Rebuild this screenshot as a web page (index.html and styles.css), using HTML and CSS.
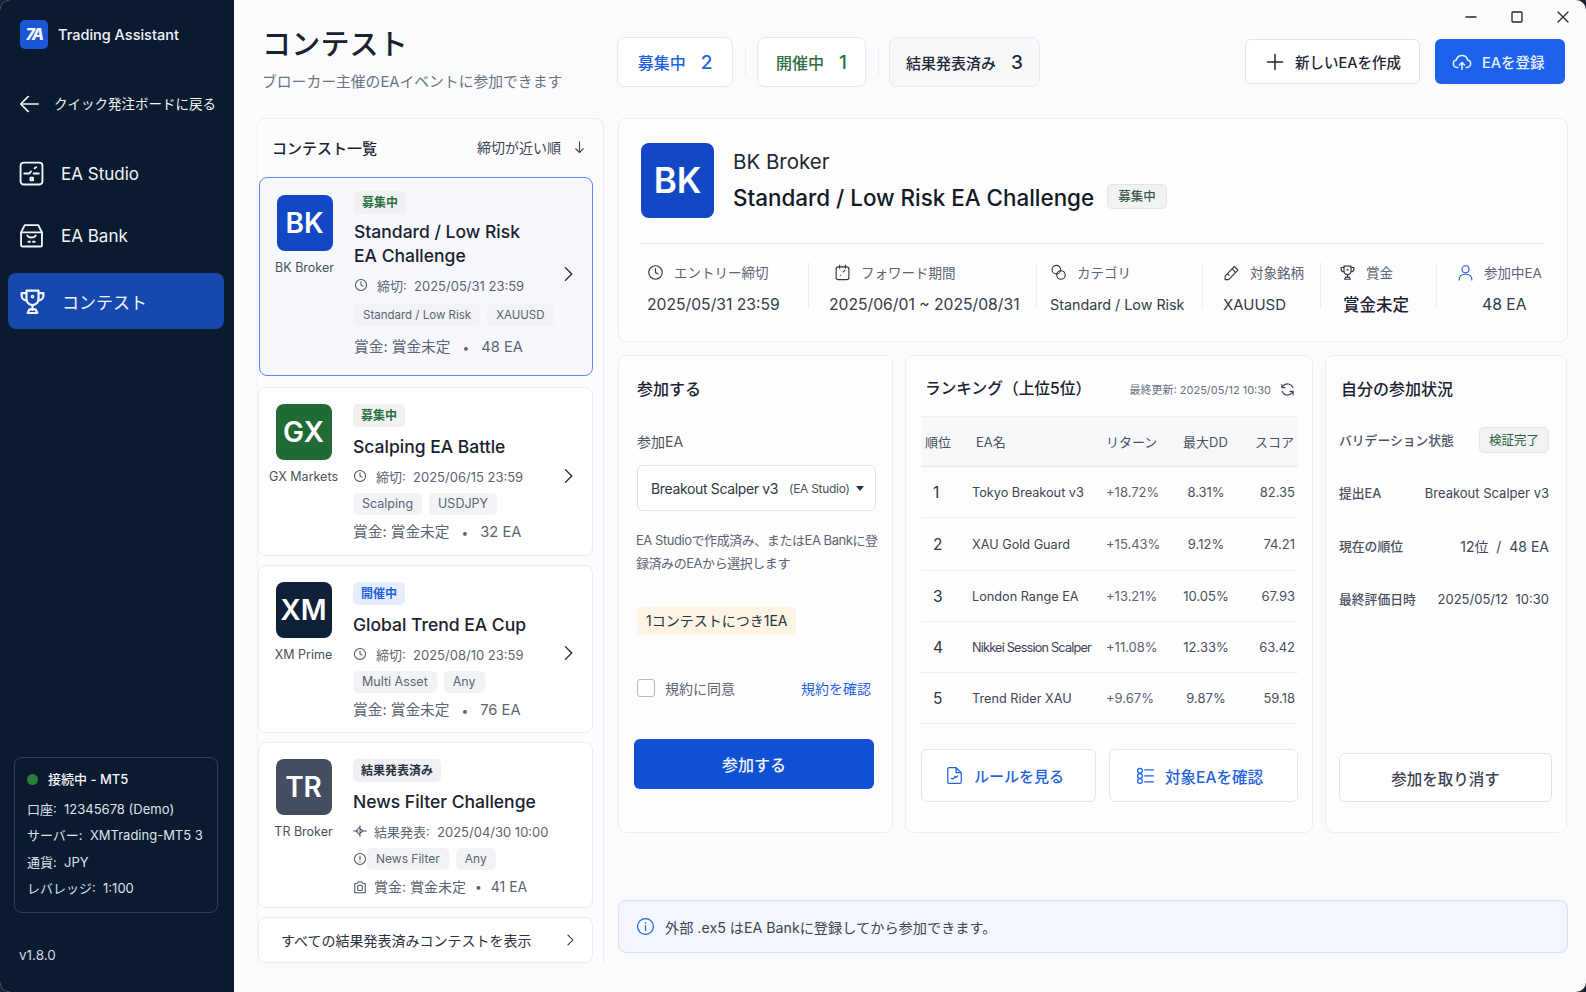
FILE: index.html
```html
<!DOCTYPE html>
<html lang="ja">
<head>
  <meta charset="UTF-8">
  <meta name="viewport" content="width=device-width, initial-scale=1.0">
  <title>Trading Assistant - コンテスト</title>
  <link rel="stylesheet" href="styles.css">
</head>
<body>
  <svg class="sprite" xmlns="http://www.w3.org/2000/svg">
    <symbol id="i-clock" viewBox="0 0 24 24"><circle cx="12" cy="12" r="9.5"/><path d="M12 6.5V12l3.5 2"/></symbol>
    <symbol id="i-chev" viewBox="0 0 24 24"><path d="M8.5 3.5 17 12l-8.5 8.5"/></symbol>
    <symbol id="i-trophy" viewBox="0 0 24 24"><path d="M7 3h10v7a5 5 0 0 1-10 0z"/><path d="M7 5H3v2a4 4 0 0 0 4 4M17 5h4v2a4 4 0 0 1-4 4M12 15v4M8 21.5l1.5-3h5l1.5 3z"/><circle cx="12" cy="8" r=".6"/></symbol>
  </svg>

  <div class="window">
    <aside class="sidebar">
      <div class="brand">
        <span class="brand-logo">7A</span>
        <span class="brand-name">Trading Assistant</span>
      </div>
      <a class="back-link">
        <svg class="ico ico-back" viewBox="0 0 24 24"><path d="M22 12H3M11 4l-8 8 8 8"/></svg>
        <span>クイック発注ボードに戻る</span>
      </a>
      <nav class="side-nav">
        <a class="nav-item">
          <svg class="ico" viewBox="0 0 24 24"><rect x="1.5" y="1.5" width="21" height="21" rx="3"/><path d="M5 12h5l1.500-2M14 12h5M15 7l1.500-1M11 16v2.500h2.500V16z"/></svg>
          <span>EA Studio</span>
        </a>
        <a class="nav-item">
          <svg class="ico" viewBox="0 0 24 24"><path d="M5.5 2h13L22 9v12a1.500 1.500 0 0 1-1.500 1.500h-17A1.500 1.500 0 0 1 2 21V9z"/><path d="M2 9h20M8 12c1 2.500 7 2.500 8 0M9 18h1.500M13.500 18H15"/></svg>
          <span>EA Bank</span>
        </a>
        <a class="nav-item nav-item-active">
          <svg class="ico ico-trophy"><use href="#i-trophy"/></svg>
          <span>コンテスト</span>
        </a>
      </nav>
      <div class="conn-box">
        <div class="conn-title"><span class="conn-dot"></span>接続中 - MT5</div>
        <div>口座:&nbsp; 12345678 (Demo)</div>
        <div>サーバー:&nbsp; XMTrading-MT5 3</div>
        <div>通貨:&nbsp; JPY</div>
        <div>レバレッジ:&nbsp; 1:100</div>
      </div>
      <div class="version">v1.8.0</div>
    </aside>

    <main class="main">
      <div class="win-controls">
        <svg viewBox="0 0 12 12"><path d="M1 6h10"/></svg>
        <svg viewBox="0 0 12 12"><rect x="1" y="1" width="10" height="10" rx="1"/></svg>
        <svg viewBox="0 0 12 12"><path d="M1 1l10 10M11 1 1 11"/></svg>
      </div>

      <header class="topbar">
        <div class="page-head">
          <h1>コンテスト</h1>
          <p>ブローカー主催のEAイベントに参加できます</p>
        </div>
        <div class="filters">
          <button class="filter filter-blue">募集中<b>2</b></button>
          <span class="filter-sep"></span>
          <button class="filter filter-green">開催中<b>1</b></button>
          <span class="filter-sep"></span>
          <button class="filter filter-gray">結果発表済み<b>3</b></button>
        </div>
        <div class="actions">
          <button class="btn-new">
            <svg class="ico-sm" viewBox="0 0 24 24"><path d="M12 3v18M3 12h18"/></svg>新しいEAを作成
          </button>
          <button class="btn-upload">
            <svg class="ico-sm" viewBox="0 0 24 24"><path d="M7 18.500H6a4.500 4.500 0 0 1-.8-8.900 7 7 0 0 1 13.600 0 4.500 4.500 0 0 1-.8 8.900h-1"/><path d="M12 21v-8M9 15.500l3-3 3 3"/></svg>EAを登録
          </button>
        </div>
      </header>

      <div class="content">
        <section class="list-panel">
          <div class="list-head">
            <h2>コンテスト一覧</h2>
            <span class="sort">締切が近い順
              <svg viewBox="0 0 24 24"><path d="M12 3v17M6 14l6 6 6-6"/></svg>
            </span>
          </div>

          <article class="card card-selected">
            <div class="broker">
              <span class="avatar av-blue">BK</span>
              <span class="broker-name">BK Broker</span>
            </div>
            <div class="card-body">
              <span class="badge badge-green">募集中</span>
              <h3>Standard / Low Risk<br>EA Challenge</h3>
              <div class="meta"><svg class="meta-ico"><use href="#i-clock"/></svg>締切:&nbsp; 2025/05/31 23:59</div>
              <div class="tags"><span>Standard / Low Risk</span><span>XAUUSD</span></div>
              <div class="prize">賞金: 賞金未定<i>•</i>48 EA</div>
            </div>
            <svg class="chev"><use href="#i-chev"/></svg>
          </article>

          <article class="card">
            <div class="broker">
              <span class="avatar av-green">GX</span>
              <span class="broker-name">GX Markets</span>
            </div>
            <div class="card-body">
              <span class="badge badge-green">募集中</span>
              <h3>Scalping EA Battle</h3>
              <div class="meta"><svg class="meta-ico"><use href="#i-clock"/></svg>締切:&nbsp; 2025/06/15 23:59</div>
              <div class="tags"><span>Scalping</span><span>USDJPY</span></div>
              <div class="prize">賞金: 賞金未定<i>•</i>32 EA</div>
            </div>
            <svg class="chev"><use href="#i-chev"/></svg>
          </article>

          <article class="card">
            <div class="broker">
              <span class="avatar av-navy">XM</span>
              <span class="broker-name">XM Prime</span>
            </div>
            <div class="card-body">
              <span class="badge badge-blue">開催中</span>
              <h3>Global Trend EA Cup</h3>
              <div class="meta"><svg class="meta-ico"><use href="#i-clock"/></svg>締切:&nbsp; 2025/08/10 23:59</div>
              <div class="tags"><span>Multi Asset</span><span>Any</span></div>
              <div class="prize">賞金: 賞金未定<i>•</i>76 EA</div>
            </div>
            <svg class="chev"><use href="#i-chev"/></svg>
          </article>

          <article class="card">
            <div class="broker">
              <span class="avatar av-slate">TR</span>
              <span class="broker-name">TR Broker</span>
            </div>
            <div class="card-body">
              <span class="badge badge-gray">結果発表済み</span>
              <h3>News Filter Challenge</h3>
              <div class="meta meta-tight"><svg class="meta-ico" viewBox="0 0 24 24"><path d="M1 12h7M12 3v18M16 12h7M12 5l-7 7 7 7M12 8l5 4-5 4"/></svg>結果発表:&nbsp; 2025/04/30 10:00</div>
              <div class="tags tags-icon">
                <svg class="meta-ico" viewBox="0 0 24 24"><circle cx="12" cy="12" r="9.500"/><path d="M12 7v6M12 16v1"/></svg>
                <span>News Filter</span><span>Any</span>
              </div>
              <div class="prize prize-icon"><svg class="meta-ico" viewBox="0 0 24 24"><path d="M3 6h4l2-3h6l2 3h4v16H3z"/><rect x="8" y="9" width="8" height="9" rx="2"/></svg>賞金: 賞金未定<i>•</i>41 EA</div>
            </div>
          </article>

          <a class="show-all">
            <span>すべての結果発表済みコンテストを表示</span>
            <svg class="chev"><use href="#i-chev"/></svg>
          </a>
        </section>

        <div class="detail-col">
          <section class="panel summary">
            <div class="summary-head">
              <span class="avatar avatar-lg av-blue">BK</span>
              <div>
                <div class="summary-broker">BK Broker</div>
                <div class="summary-title">Standard / Low Risk EA Challenge <span class="badge badge-soft">募集中</span></div>
              </div>
            </div>
            <div class="stats">
              <div class="stat">
                <div class="stat-label"><svg class="stat-ico"><use href="#i-clock"/></svg>エントリー締切</div>
                <div class="stat-value">2025/05/31 23:59</div>
              </div>
              <div class="stat">
                <div class="stat-label"><svg class="stat-ico" viewBox="0 0 24 24"><rect x="3" y="4" width="18" height="18" rx="3"/><path d="M8 1.500V6M16 1.500V6M15 9l-2 2M9 16h.1"/></svg>フォワード期間</div>
                <div class="stat-value">2025/06/01 ~ 2025/08/31</div>
              </div>
              <div class="stat">
                <div class="stat-label"><svg class="stat-ico" viewBox="0 0 24 24"><circle cx="9" cy="8" r="6"/><circle cx="15.500" cy="15.500" r="6"/></svg>カテゴリ</div>
                <div class="stat-value">Standard / Low Risk</div>
              </div>
              <div class="stat">
                <div class="stat-label"><svg class="stat-ico" viewBox="0 0 24 24"><path d="M3 17 16 3.500l5 5L8 22H3zM13 7l4 4M6.500 14l2 2"/></svg>対象銘柄</div>
                <div class="stat-value">XAUUSD</div>
              </div>
              <div class="stat">
                <div class="stat-label"><svg class="stat-ico"><use href="#i-trophy"/></svg>賞金</div>
                <div class="stat-value stat-strong">賞金未定</div>
              </div>
              <div class="stat">
                <div class="stat-label"><svg class="stat-ico stat-ico-blue" viewBox="0 0 24 24"><circle cx="12" cy="7.500" r="5"/><path d="M3 22.500c0-5.500 4-8 9-8s9 2.500 9 8"/></svg>参加中EA</div>
                <div class="stat-value">48 EA</div>
              </div>
            </div>
          </section>

          <div class="panels">
            <section class="panel join">
              <h2>参加する</h2>
              <label class="field-label">参加EA</label>
              <div class="select">
                <span>Breakout Scalper v3</span><small>(EA Studio)</small><i class="caret"></i>
              </div>
              <p class="help">EA Studioで作成済み、またはEA Bankに登<br>録済みのEAから選択します</p>
              <div class="limit">1コンテストにつき1EA</div>
              <div class="agree">
                <span class="check"></span>
                <span class="agree-text">規約に同意</span>
                <a class="agree-link">規約を確認</a>
              </div>
              <button class="btn-join">参加する</button>
            </section>

            <section class="panel ranking">
              <div class="rank-head">
                <h2>ランキング（上位5位）</h2>
                <span class="updated">最終更新: 2025/05/12 10:30</span>
                <svg class="refresh" viewBox="0 0 24 24"><path d="M20.500 9A9 9 0 0 0 5 6.500L3 9M3.500 15A9 9 0 0 0 19 17.500l2-2.500M3 3.500V9h5M21 20.500V15h-5"/></svg>
              </div>
              <table class="rank-table">
                <thead>
                  <tr><th>順位</th><th>EA名</th><th>リターン</th><th>最大DD</th><th>スコア</th></tr>
                </thead>
                <tbody>
                  <tr><td>1</td><td>Tokyo Breakout v3</td><td>+18.72%</td><td>8.31%</td><td>82.35</td></tr>
                  <tr><td>2</td><td>XAU Gold Guard</td><td>+15.43%</td><td>9.12%</td><td>74.21</td></tr>
                  <tr><td>3</td><td>London Range EA</td><td>+13.21%</td><td>10.05%</td><td>67.93</td></tr>
                  <tr><td>4</td><td class="name-tight">Nikkei Session Scalper</td><td>+11.08%</td><td>12.33%</td><td>63.42</td></tr>
                  <tr><td>5</td><td>Trend Rider XAU</td><td>+9.67%</td><td>9.87%</td><td>59.18</td></tr>
                </tbody>
              </table>
              <div class="rank-actions">
                <button class="btn-outline btn-rules">
                  <svg viewBox="0 0 24 24"><path d="M14 2H5a1.500 1.500 0 0 0-1.500 1.500v17A1.500 1.500 0 0 0 5 22h14a1.500 1.500 0 0 0 1.500-1.500V8.500zM14 2v6.500h6.500M8 16h3l1.500-3 1.500 1.500 2-2"/></svg>ルールを見る
                </button>
                <button class="btn-outline btn-targets">
                  <svg viewBox="0 0 24 24"><circle cx="5" cy="6" r="3"/><circle cx="5" cy="12.500" r="3"/><circle cx="5" cy="19" r="3"/><path d="M11 5h11M11 12.500h11M11 20h11"/></svg>対象EAを確認
                </button>
              </div>
            </section>

            <section class="panel status">
              <h2>自分の参加状況</h2>
              <dl class="status-list">
                <div><dt>バリデーション状態</dt><dd><span class="badge-done">検証完了</span></dd></div>
                <div><dt>提出EA</dt><dd>Breakout Scalper v3</dd></div>
                <div><dt>現在の順位</dt><dd class="status-rank">12位&nbsp; /&nbsp; 48 EA</dd></div>
                <div><dt>最終評価日時</dt><dd>2025/05/12&nbsp; 10:30</dd></div>
              </dl>
              <button class="btn-cancel">参加を取り消す</button>
            </section>
          </div>

          <div class="notice">
            <svg viewBox="0 0 24 24"><circle cx="12" cy="12" r="10"/><path d="M12 11v6M12 7v1"/></svg>
            外部 .ex5 はEA Bankに登録してから参加できます。
          </div>
        </div>
      </div>
    </main>
  </div>
</body>
</html>
```

FILE: styles.css
```css
* {
  box-sizing: border-box;
}

html, body {
  margin: 0;
  height: 100%;
  background: #1c2433;
}

body {
  font-family: "Inter", "Noto Sans CJK JP", sans-serif;
  color: #1b2433;
  overflow: hidden;
}

.sprite {
  display: none;
}

h1, h2, h3, p, dl, dd {
  margin: 0;
  font-weight: 500;
}

button {
  font-family: inherit;
  cursor: pointer;
}

svg {
  fill: none;
  stroke: currentColor;
  stroke-linecap: round;
  stroke-linejoin: round;
  stroke-width: 1.8;
}

.window {
  display: flex;
  width: 1586px;
  height: 992px;
  border-radius: 10px;
  overflow: hidden;
  background: #fafbfd;
}

/* sidebar */
.sidebar {
  width: 234px;
  flex: none;
  display: flex;
  flex-direction: column;
  background: #0a1a2f;
  color: #f2f5fa;
  padding: 20px 0 0;
}

.brand {
  display: flex;
  align-items: center;
  gap: 10px;
  padding-left: 20px;
}

.brand-logo {
  width: 28px;
  height: 29px;
  border-radius: 5px;
  background: #1a56d6;
  font-size: 16px;
  font-weight: 800;
  font-style: italic;
  letter-spacing: -1.5px;
  text-align: center;
  line-height: 29px;
}

.brand-name {
  font-size: 14.5px;
  font-weight: 500;
}

.back-link {
  display: flex;
  align-items: center;
  gap: 14px;
  margin-top: 42px;
  padding-left: 18px;
  font-size: 13.500px;
  line-height: 26px;
}

.ico {
  width: 25px;
  height: 25px;
  flex: none;
}

.ico-back {
  width: 22px;
  height: 22px;
}

.side-nav {
  margin: 29px 10px 0 8px;
  display: flex;
  flex-direction: column;
  gap: 8px;
}

.nav-item {
  display: flex;
  align-items: center;
  gap: 17px;
  height: 55px;
  padding-left: 11px;
  border-radius: 8px;
  font-size: 17px;
}

.nav-item + .nav-item {
  margin-top: -1px;
}

.nav-item-active {
  margin-top: 2px !important;
  height: 56px;
  gap: 15px;
  padding-left: 10px;
  background: #1648ae;
}

.ico-trophy {
  width: 29px;
  height: 29px;
}

.conn-box {
  margin: auto 16px 0 14px;
  height: 156px;
  padding: 8px 12px;
  border: 1px solid #333f52;
  border-radius: 8px;
  font-size: 13px;
  line-height: 26.500px;
  color: #dde3ec;
}

.conn-title {
  display: flex;
  align-items: center;
  gap: 10px;
  margin-bottom: 3px;
  color: #f4f6fa;
  font-weight: 500;
}

.conn-dot {
  width: 11px;
  height: 11px;
  border-radius: 50%;
  background: #2a7d3c;
}

.version {
  margin: 32px 0 27px 19px;
  font-size: 13.500px;
  line-height: 20px;
  color: #cfd6e0;
}

/* main */
.main {
  flex: 1;
  min-width: 0;
  position: relative;
  display: flex;
  flex-direction: column;
  padding-left: 23px;
}

.win-controls {
  position: absolute;
  top: 11px;
  right: 17px;
  display: flex;
  gap: 34px;
  color: #1f2735;
}

.win-controls svg {
  width: 12px;
  height: 12px;
  stroke-width: 1.300;
}

.topbar {
  height: 118px;
  flex: none;
  display: flex;
  padding: 37px 21px 0 5px;
}

.page-head {
  width: 355px;
  flex: none;
  white-space: nowrap;
}

.page-head h1 {
  font-size: 29px;
  line-height: 40px;
  margin-top: -12px;
  letter-spacing: .2px;
  color: #1a2230;
}

.page-head p {
  margin-top: 6px;
  font-size: 14.800px;
  line-height: 22px;
  font-weight: 400;
  color: #6a7382;
}

.filters {
  display: flex;
  align-items: center;
  height: 50px;
  gap: 12px;
}

.filter {
  height: 50px;
  padding: 0;
  border: 1px solid #e6e9ef;
  border-radius: 8px;
  background: #fff;
  font-size: 16px;
  font-weight: 500;
}

.filter b {
  font-size: 19px;
  font-weight: 500;
  margin-left: 15px;
}

.filter-blue { width: 116px; color: #1f63e0; }
.filter-green { width: 109px; margin-left: -1px; color: #2a7040; }
.filter-gray { width: 151px; margin-left: -2px; color: #1f2735; background: #f7f8fa; font-size: 15px; }

.filter-sep {
  width: 1px;
  height: 30px;
  background: #eceef2;
}

.actions {
  margin-left: auto;
  display: flex;
  gap: 15px;
  height: 45px;
  margin-top: 2px;
}

.btn-new, .btn-upload {
  display: flex;
  align-items: center;
  gap: 10px;
  border-radius: 6px;
  font-size: 14.500px;
  font-weight: 500;
}

.btn-new {
  width: 175px;
  padding-left: 19px;
  background: #fff;
  color: #1f2735;
  border: 1px solid #dfe3ea;
}

.btn-upload {
  width: 130px;
  padding-left: 17px;
  background: #1d62ec;
  color: #e9f0ff;
  border: none;
}

.ico-sm {
  width: 20px;
  height: 20px;
  flex: none;
}

.content {
  flex: 1;
  min-height: 0;
  display: flex;
  gap: 14px;
}

/* contest list */
.list-panel {
  width: 347px;
  flex: none;
  height: 845px;
  padding-right: 12px;
  border: 1px solid #eceef3;
  border-bottom: none;
  border-left-color: #f2f3f7;
  border-radius: 8px 8px 0 0;
  background: #fcfcfe;
  display: flex;
  flex-direction: column;
  gap: 9px;
}

.list-head {
  height: 58px;
  flex: none;
  margin-bottom: -9px;
  display: flex;
  align-items: center;
  justify-content: space-between;
  padding: 0 4px 2px 14px;
}

.list-head h2 {
  font-size: 15px;
}

.sort {
  display: flex;
  align-items: center;
  gap: 11px;
  font-size: 14px;
  color: #3d4554;
}

.sort svg {
  width: 15px;
  height: 15px;
}

.card {
  display: flex;
  flex: none;
  width: 335px;
  height: 169px;
  padding: 16px 12px 0 10.500px;
  background: #fff;
  border: 1px solid #e9ecf1;
  border-radius: 8px;
}

.card:nth-of-type(3) { height: 168px; }
.card:nth-of-type(4) { height: 166px; }

.card-selected {
  height: 199px;
  padding-left: 10.500px;
  margin-left: 1px;
  margin-bottom: 2px;
  width: 334px;
  background: #f6f8fd;
  border-color: #5b8cf0;
}

.broker {
  width: 68px;
  flex: none;
  display: flex;
  flex-direction: column;
  align-items: center;
}

.card-selected .broker {
  padding-top: 1px;
}

.avatar {
  width: 56px;
  height: 56px;
  border-radius: 8px;
  color: #fff;
  font-size: 28px;
  font-weight: 600;
  line-height: 56px;
  text-align: center;
}

.av-blue { background: #1248c4; }
.av-green { background: #1f6a35; }
.av-navy { background: #0f2138; }
.av-slate { background: #444e60; }

.broker-name {
  margin-top: 9px;
  font-size: 12.500px;
  line-height: 16px;
  white-space: nowrap;
  color: #4a5260;
}

.card-body {
  flex: 1;
  min-width: 0;
  margin-left: 15.500px;
}

.card-selected .card-body {
  margin-top: -3px;
}

.badge {
  display: inline-block;
  padding: 0 8px;
  height: 23px;
  line-height: 23px;
  border-radius: 5px;
  font-size: 12px;
  font-weight: 700;
}

.badge-green { background: #eff1f3; color: #2a7040; }
.badge-blue { background: #e6edfc; color: #1f5fe0; }
.badge-gray { background: #f0f1f4; color: #2a3240; }

.card h3 {
  font-size: 17.500px;
  line-height: 24px;
  margin-top: 8px;
  color: #1a2230;
}

.card-selected h3 {
  margin-top: 6px;
}

.meta {
  display: flex;
  align-items: center;
  gap: 9px;
  margin-top: 7px;
  height: 20px;
  font-size: 13px;
  color: #5b6473;
}

.meta-tight {
  gap: 7px;
}

.card-selected .meta {
  margin-top: 7px;
}

.meta-ico {
  width: 14px;
  height: 14px;
  flex: none;
  stroke: #4a5260;
}

.tags {
  display: flex;
  align-items: center;
  gap: 7px;
  margin-top: 7px;
  white-space: nowrap;
}

.card-selected .tags {
  margin-top: 9px;
}

.tags span {
  height: 22px;
  line-height: 22px;
  padding: 0 9px;
  border-radius: 5px;
  background: #f2f3f6;
  font-size: 12.500px;
  color: #5b6473;
}

.card-selected .tags span {
  font-size: 11.500px;
}

.tags-icon .meta-ico {
  margin-right: -7px;
}

.tags-icon span {
  font-size: 12px;
}

.prize {
  margin-top: 6px;
  height: 22px;
  line-height: 22px;
  font-size: 14.700px;
  color: #5b6473;
}

.card-selected .prize {
  margin-top: 10px;
}

.prize i {
  font-style: normal;
  margin: 0 12px;
  font-size: 12px;
}

.prize-icon {
  display: flex;
  align-items: center;
  gap: 7px;
  font-size: 14px;
}

.prize-icon i {
  margin: 0 2px;
}

.chev {
  width: 18px;
  height: 18px;
  flex: none;
  align-self: center;
  margin: -8px 3px 0 0;
  color: #1f2735;
}

.card-selected .chev {
  margin-top: -22px;
}

.show-all {
  display: flex;
  flex: none;
  align-items: center;
  justify-content: space-between;
  width: 335px;
  height: 46px;
  padding-left: 22px;
  background: #fff;
  border: 1px solid #e9ecf1;
  border-radius: 8px;
  font-size: 14px;
  color: #2a3240;
}

.show-all .chev {
  margin: 0 15px 0 0;
  width: 14px;
  height: 14px;
}

/* right column */
.detail-col {
  flex: 1;
  min-width: 0;
  display: flex;
  flex-direction: column;
  padding: 0 18px 39px 0;
  gap: 13px;
}

.panel {
  background: #fdfdfe;
  border: 1px solid #eceef3;
  border-radius: 8px;
}

.summary {
  height: 224px;
  padding: 24px 22px 0 22px;
}

.summary-head {
  display: flex;
  gap: 19px;
  height: 101px;
  border-bottom: 1px solid #e6e8ed;
}

.avatar-lg {
  width: 73px;
  height: 75px;
  line-height: 75px;
  font-size: 35px;
}

.summary-broker {
  margin-top: 4px;
  font-size: 20.500px;
  line-height: 30px;
  font-weight: 400;
  color: #1f2735;
}

.summary-title {
  display: flex;
  align-items: center;
  gap: 13px;
  margin-top: 3px;
  font-size: 22.400px;
  font-weight: 500;
  line-height: 36px;
  color: #121a28;
}

.badge-soft {
  height: 25px;
  line-height: 24px;
  margin-top: -3px;
  padding: 0 10px;
  font-size: 12.500px;
  font-weight: 500;
  background: #f0f2f3;
  border: 1px solid #e4e7ea;
  color: #405a4c;
}

.stats {
  display: grid;
  grid-template-columns: 168px 228px 166px 118px 116px 1fr;
  margin-top: 18px;
}

.stat {
  height: 46px;
  border-right: 1px solid #eceef2;
  white-space: nowrap;
}

.stat:last-child {
  border-right: none;
}

.stat:nth-child(1) { padding-left: 6px; }
.stat:nth-child(2) { padding-left: 20px; }
.stat:nth-child(3) { padding-left: 13px; }
.stat:nth-child(4) { padding-left: 20px; }
.stat:nth-child(5) { padding-left: 18px; }
.stat:nth-child(6) { padding-left: 20px; }

.stat-label {
  display: flex;
  align-items: center;
  gap: 10px;
  height: 20px;
  font-size: 13.500px;
  color: #5b6473;
}

.stat:nth-child(2) .stat-label { padding-left: 5px; }

.stat-ico {
  width: 17px;
  height: 17px;
  flex: none;
  color: #2f3846;
  stroke-width: 1.600;
}

.stat-ico-blue {
  color: #1f63e0;
}

.stat-value {
  margin-top: 12px;
  font-size: 15.700px;
  line-height: 22px;
  color: #333c4b;
}

.stat:nth-child(3) .stat-value { font-size: 14.300px; }
.stat:nth-child(4) .stat-value { font-size: 15px; }
.stat:nth-child(6) .stat-value { padding-left: 25px; }

.stat-strong {
  padding-left: 4px;
  font-size: 16.500px;
  font-weight: 500;
  color: #1b2433;
}

.panels {
  display: grid;
  grid-template-columns: 275px 408px 242px;
  gap: 12px;
  height: 478px;
}

.panel h2 {
  font-size: 16px;
  line-height: 24px;
  color: #1a2230;
}

/* join */
.join {
  padding: 21px 16px 0 18px;
}

.field-label {
  display: block;
  margin-top: 31px;
  font-size: 14px;
  line-height: 20px;
  color: #4a5260;
}

.select {
  display: flex;
  align-items: center;
  height: 46px;
  margin-top: 13px;
  padding-left: 13px;
  border: 1px solid #dfe3ea;
  border-radius: 6px;
  background: #fff;
  font-size: 14px;
  letter-spacing: -.35px;
  white-space: nowrap;
  color: #2f3846;
}

.select small {
  margin-left: 11px;
  font-size: 12px;
  letter-spacing: -.3px;
  color: #4a5260;
}

.caret {
  margin-left: 7px;
  border: 4px solid transparent;
  border-top: 5px solid #2a3240;
  border-bottom: none;
}

.help {
  margin: 18px -6px 0 -1px;
  font-size: 13px;
  font-weight: 400;
  line-height: 23px;
  letter-spacing: -.45px;
  white-space: nowrap;
  color: #5b6473;
}

.limit {
  display: inline-block;
  margin-top: 32px;
  padding: 0 9px;
  height: 28px;
  line-height: 28px;
  border-radius: 4px;
  background: #fdf4e6;
  font-size: 14px;
  color: #2a3240;
}

.agree {
  display: flex;
  align-items: center;
  margin-top: 43px;
  font-size: 14px;
  color: #5b6473;
}

.check {
  width: 18px;
  height: 18px;
  border: 1.500px solid #b4bac4;
  border-radius: 3px;
  background: #fff;
}

.agree-text {
  margin-left: 10px;
}

.agree-link {
  margin-left: auto;
  margin-right: 5px;
  color: #1f63e0;
}

.btn-join {
  display: block;
  width: 240px;
  height: 50px;
  margin: 41px 0 0 -3px;
  border: none;
  border-radius: 6px;
  background: #1050d2;
  color: #eef3ff;
  font-size: 16px;
  font-weight: 500;
}

/* ranking */
.ranking {
  padding: 21px 14px 0 15px;
}

.rank-head {
  display: flex;
  align-items: center;
  height: 24px;
  padding: 0 3px 0 4px;
}

.rank-head h2 {
  font-size: 15.700px;
}

.updated {
  margin-left: auto;
  font-size: 11px;
  color: #6a7382;
}

.refresh {
  width: 15px;
  height: 15px;
  margin-left: 9px;
  color: #3d4554;
}

.rank-table {
  width: 100%;
  margin-top: 15px;
  border-collapse: collapse;
  table-layout: fixed;
}

.rank-table th {
  height: 50px;
  background: #f7f8f9;
  border-top: 1px solid #eef0f3;
  border-bottom: 1px solid #e4e7ec;
  font-size: 13px;
  font-weight: 400;
  color: #4a5260;
  text-align: left;
}

.rank-table td {
  height: 51px;
  border-bottom: 1px solid #eceef2;
  font-size: 13px;
  color: #4a5260;
  white-space: nowrap;
}

.rank-table tr:nth-child(2) td {
  height: 53px;
}

.rank-table th:nth-child(1) { width: 50px; padding-left: 4px; }
.rank-table th:nth-child(2) { width: 130px; padding-left: 5px; }
.rank-table th:nth-child(3) { width: 69px; padding-left: 5px; }
.rank-table th:nth-child(4) { width: 72px; padding-left: 0; text-align: center; }
.rank-table th:nth-child(5) { text-align: right; padding-right: 4px; }

.rank-table td:nth-child(1) { padding-left: 12px; font-size: 15.500px; color: #2f3846; }
.rank-table td:nth-child(2) { padding-left: 1px; font-size: 12.700px; color: #3d4554; }
.rank-table td:nth-child(3) { padding-left: 5px; color: #5b6473; }
.rank-table td:nth-child(4) { text-align: center; }
.rank-table td:nth-child(5) { text-align: right; padding-right: 3px; }

.rank-table td.name-tight {
  letter-spacing: -.8px;
}

.rank-actions {
  display: flex;
  gap: 13px;
  margin-top: 25px;
}

.btn-outline {
  display: flex;
  align-items: center;
  justify-content: center;
  gap: 10px;
  height: 53px;
  padding: 0 8px 0 0;
  border: 1px solid #e3e6ec;
  border-radius: 6px;
  background: #fff;
  color: #1f63e0;
  font-size: 15px;
  font-weight: 500;
}

.btn-outline svg {
  width: 19px;
  height: 19px;
  stroke-width: 1.600;
}

.btn-rules { width: 175px; }
.btn-targets { width: 189px; font-size: 15.500px; }

/* my status */
.status {
  padding: 21px 17px 0 13px;
  display: flex;
  flex-direction: column;
}

.status h2 {
  padding-left: 2px;
}

.status-list {
  margin-top: 12px;
  display: flex;
  flex-direction: column;
}

.status-list div {
  display: flex;
  align-items: center;
  justify-content: space-between;
  height: 53px;
  font-size: 12.800px;
  color: #4a5260;
  white-space: nowrap;
}

.status-list dd {
  font-weight: 400;
  font-size: 13px;
  color: #3d4554;
}

.status-list dd.status-rank {
  font-size: 14px;
}

.badge-done {
  display: block;
  height: 26px;
  line-height: 25px;
  padding: 0 9px;
  border-radius: 5px;
  background: #f0f2f3;
  border: 1px solid #e2e5e8;
  font-size: 12.500px;
  color: #2a6040;
}

.btn-cancel {
  width: 213px;
  height: 49px;
  margin-top: auto;
  margin-bottom: 30px;
  border: 1px solid #dfe3ea;
  border-radius: 6px;
  background: #fff;
  color: #3d4554;
  font-size: 15.500px;
  font-weight: 500;
}

.notice {
  margin-top: auto;
  height: 53px;
  display: flex;
  align-items: center;
  gap: 10px;
  padding-left: 17px;
  border: 1px solid #d6e1f8;
  border-radius: 8px;
  background: #f3f6fc;
  font-size: 14.200px;
  color: #3d4554;
}

.notice svg {
  width: 19px;
  height: 19px;
  color: #1f63e0;
  stroke-width: 1.500;
}
```
